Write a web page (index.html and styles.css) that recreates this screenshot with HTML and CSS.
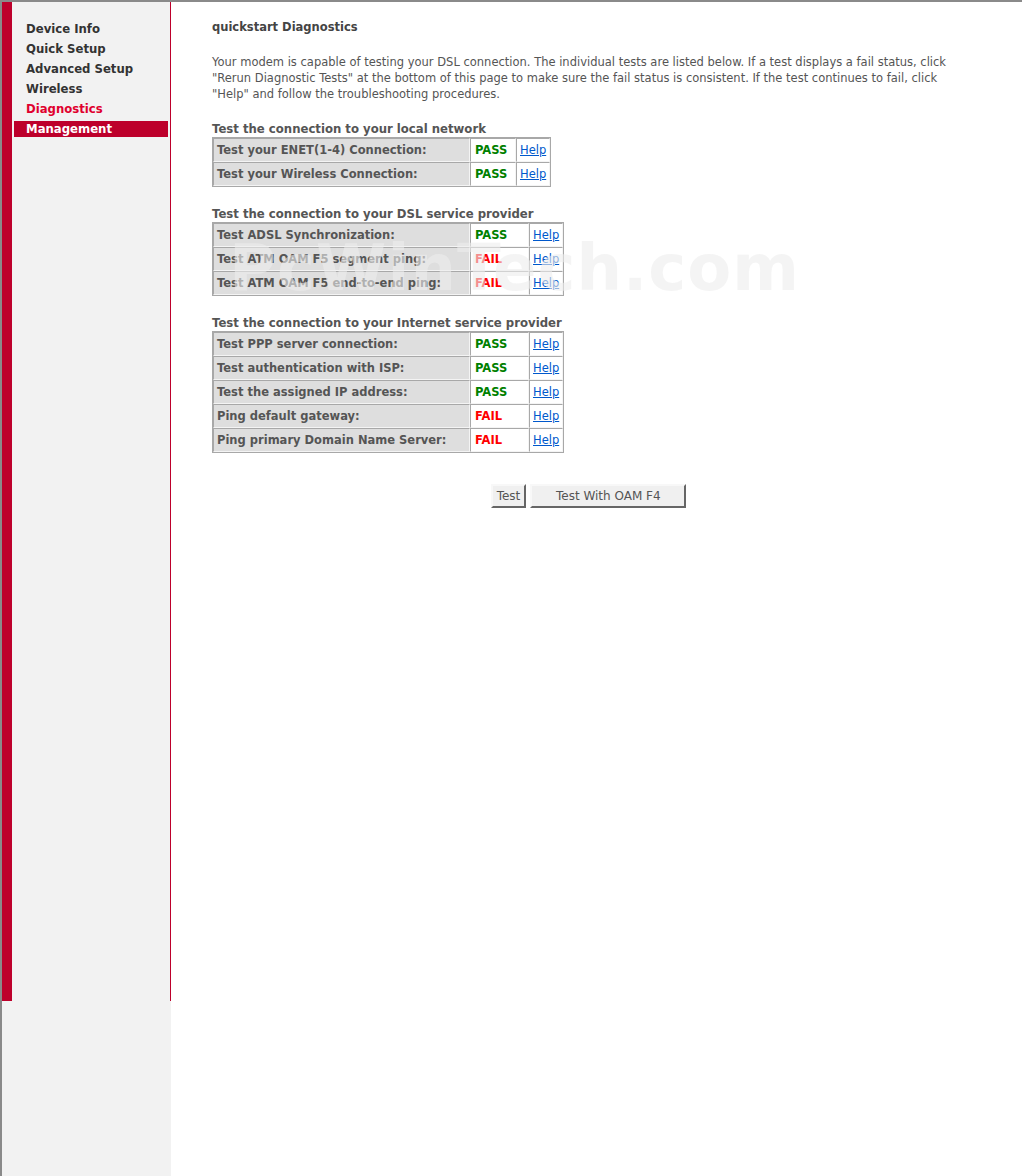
FILE: index.html
```html
<!DOCTYPE html>
<html lang="en">

<head>
    <meta charset="UTF-8">
    <title>quickstart Diagnostics</title>
    <link rel="stylesheet" href="styles.css">
</head>

<body>
    <div class="page">
        <div class="sidebar">
            <div class="menu-frame">
                <ul class="menu">
                    <li><a href="#">Device Info</a></li>
                    <li><a href="#">Quick Setup</a></li>
                    <li><a href="#">Advanced Setup</a></li>
                    <li><a href="#">Wireless</a></li>
                    <li class="current"><a href="#">Diagnostics</a></li>
                    <li class="selected"><a href="#">Management</a></li>
                </ul>
            </div>
        </div>

        <div class="main">
            <div class="content">
                <div class="title">quickstart Diagnostics</div>

                <p class="intro">Your modem is capable of testing your DSL connection. The individual tests are listed below. If a test displays a fail status, click "Rerun Diagnostic Tests" at the bottom of this page to make sure the fail status is consistent. If the test continues to fail, click "Help" and follow the troubleshooting procedures.</p>

                <div class="section-title">Test the connection to your local network</div>
                <table class="diag narrow">
                    <tr>
                        <td class="label">Test your ENET(1-4) Connection:</td>
                        <td class="status pass">PASS</td>
                        <td class="help"><a href="#">Help</a></td>
                    </tr>
                    <tr>
                        <td class="label">Test your Wireless Connection:</td>
                        <td class="status pass">PASS</td>
                        <td class="help"><a href="#">Help</a></td>
                    </tr>
                </table>

                <div class="section-title">Test the connection to your DSL service provider</div>
                <table class="diag">
                    <tr>
                        <td class="label">Test ADSL Synchronization:</td>
                        <td class="status pass">PASS</td>
                        <td class="help"><a href="#">Help</a></td>
                    </tr>
                    <tr>
                        <td class="label">Test ATM OAM F5 segment ping:</td>
                        <td class="status fail">FAIL</td>
                        <td class="help"><a href="#">Help</a></td>
                    </tr>
                    <tr>
                        <td class="label">Test ATM OAM F5 end-to-end ping:</td>
                        <td class="status fail">FAIL</td>
                        <td class="help"><a href="#">Help</a></td>
                    </tr>
                </table>

                <div class="section-title">Test the connection to your Internet service provider</div>
                <table class="diag">
                    <tr>
                        <td class="label">Test PPP server connection:</td>
                        <td class="status pass">PASS</td>
                        <td class="help"><a href="#">Help</a></td>
                    </tr>
                    <tr>
                        <td class="label">Test authentication with ISP:</td>
                        <td class="status pass">PASS</td>
                        <td class="help"><a href="#">Help</a></td>
                    </tr>
                    <tr>
                        <td class="label">Test the assigned IP address:</td>
                        <td class="status pass">PASS</td>
                        <td class="help"><a href="#">Help</a></td>
                    </tr>
                    <tr>
                        <td class="label">Ping default gateway:</td>
                        <td class="status fail">FAIL</td>
                        <td class="help"><a href="#">Help</a></td>
                    </tr>
                    <tr>
                        <td class="label">Ping primary Domain Name Server:</td>
                        <td class="status fail">FAIL</td>
                        <td class="help"><a href="#">Help</a></td>
                    </tr>
                </table>

                <div class="buttons">
                    <button class="btn">Test</button>
                    <button class="btn wide">Test With OAM F4</button>
                </div>
            </div>

            <div class="watermark">PcWinTech.com</div>
        </div>
    </div>
</body>

</html>
```

FILE: styles.css
```css
body {
    margin: 0;
    font-family: 'DejaVu Sans', sans-serif;
    font-size: 11.5px;
    color: #555;
    background-color: white;
}

.page {
    display: flex;
    height: 1174px;
    border-top: 2px solid #8a8a8a;
    border-left: 2px solid #8a8a8a;
}

.sidebar {
    width: 169px;
    flex-shrink: 0;
    background-color: #f2f2f2;
}

.menu-frame {
    height: 999px;
    border-left: 10px solid #bd002b;
    border-right: 1px solid #bd002b;
}

.menu {
    list-style: none;
    margin: 0;
    padding: 17px 0 0 0;
}

.menu li {
    margin: 4px 2px 0 2px;
    height: 16px;
    line-height: 16px;
    padding-left: 12px;
}

.menu li:first-child {
    margin-top: 2px;
}

.menu li a {
    color: #333;
    font-weight: bold;
    font-size: 11.7px;
    text-decoration: none;
}

.menu li.current a {
    color: #e0002e;
}

.menu li.selected {
    background-color: #bd002b;
}

.menu li.selected a {
    color: white;
}

.main {
    position: relative;
    flex: 1;
}

.content {
    width: 753px;
    padding: 17px 0 0 41px;
}

.title {
    font-weight: bold;
    color: #444;
    line-height: 16px;
}

.intro {
    margin: 19px 0 19px 0;
    line-height: 16px;
}

.section-title {
    font-weight: bold;
    font-size: 11.7px;
    line-height: 16px;
    color: #555;
}

table.diag {
    border-spacing: 0;
    border: 1px solid #a8a8a8;
    margin-bottom: 19px;
}

.diag td {
    border: 1px solid;
    border-color: #a8a8a8 #f4f4f4 #f4f4f4 #a8a8a8;
    height: 22px;
    padding: 0 3px;
}

.diag .label {
    width: 249px;
    background-color: #dedede;
    font-weight: bold;
}

.diag .status {
    width: 50px;
    padding-left: 4px;
    font-weight: bold;
}

.narrow .status {
    width: 37px;
}

.diag .help {
    width: 26px;
}

.diag .help a {
    color: #0058cc;
}

.pass {
    color: #008000;
}

.fail {
    color: #ff0000;
}

.buttons {
    display: flex;
    justify-content: center;
    gap: 4px;
    margin-top: 31px;
}

.btn {
    height: 24px;
    padding: 0 4px;
    background-color: #f0f0f0;
    border: 2px solid;
    border-color: #f8f8f8 #666 #666 #f8f8f8;
    color: #555;
    font-family: 'DejaVu Sans', sans-serif;
    font-size: 12px;
}

.btn.wide {
    width: 156px;
}

.watermark {
    position: absolute;
    left: 58px;
    top: 229px;
    font-size: 64px;
    font-weight: bold;
    color: rgba(236, 236, 236, 0.6);
    letter-spacing: 1px;
    pointer-events: none;
}
```
